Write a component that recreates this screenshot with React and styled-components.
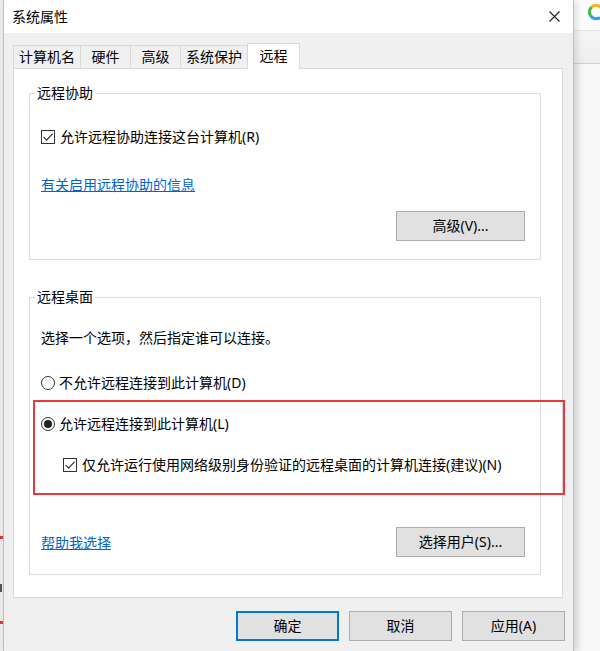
import React from 'react';
import styled, { createGlobalStyle, css } from 'styled-components';

const GlobalStyle = createGlobalStyle`
  html, body {
    margin: 0;
    padding: 0;
  }
  body {
    width: 600px;
    height: 651px;
    overflow: hidden;
    background: #f3f3f3;
    font-family: "Noto Sans", "Noto Sans CJK SC", sans-serif;
    color: #000;
  }
`;

const Screen = styled.div`
  display: flex;
  width: 600px;
  height: 651px;
  overflow: hidden;
`;

const LeftStrip = styled.div`
  flex: none;
  width: 3px;
  background:
    linear-gradient(#e2393b, #e2393b) 0 536px / 3px 3px no-repeat,
    linear-gradient(#555, #555) 0 584px / 2px 8px no-repeat,
    linear-gradient(#e2393b, #e2393b) 0 621px / 3px 3px no-repeat,
    #eeece8;
`;

const Dialog = styled.div`
  flex: none;
  width: 571px;
  box-sizing: border-box;
  border-left: 1px solid #cdbd98;
  border-right: 1px solid #cdbd98;
  background: #f0f0f0;
  display: flex;
  flex-direction: column;
  position: relative;
  z-index: 1;
  box-shadow: 3px 0 8px rgba(0, 0, 0, 0.12);
`;

const TitleBar = styled.div`
  height: 33px;
  flex: none;
  background: #fff;
  display: flex;
  align-items: center;
  justify-content: space-between;
  padding: 0 13px 0 8px;
  font-size: 14px;
  line-height: 20px;
`;

const CloseIcon = () => (
  <svg width="11" height="11" viewBox="0 0 11 11">
    <path d="M0.5 0.5 L10.5 10.5 M10.5 0.5 L0.5 10.5" stroke="#222" strokeWidth="1.1" fill="none" />
  </svg>
);

const Body = styled.div`
  padding-top: 10px;
  display: flex;
  flex-direction: column;
`;

const TabStrip = styled.div`
  display: flex;
  align-items: flex-end;
  padding-left: 9px;
`;

const Tab = styled.div`
  box-sizing: border-box;
  height: 23px;
  min-width: 51px;
  padding: 0 5px;
  border: 1px solid #d9d9d9;
  border-bottom: none;
  background: #f0f0f0;
  display: flex;
  align-items: center;
  justify-content: center;
  font-size: 14px;
  line-height: 20px;
  & + & {
    margin-left: -1px;
  }
  ${({ $active }) =>
    $active &&
    css`
      height: 26px;
      min-width: 53px;
      background: #fff;
      margin-bottom: -1px;
      position: relative;
      z-index: 1;
      padding-bottom: 2px;
    `}
`;

const Panel = styled.div`
  margin: 0 10px 0 9px;
  background: #fff;
  border: 1px solid #d9d9d9;
  padding: 0 21px 22px 15px;
  display: flex;
  flex-direction: column;
`;

const Group = styled.fieldset`
  margin: ${({ $gap }) => $gap}px 0 0;
  padding: 0;
  border: 1px solid #dcdcdc;
  min-width: 0;
`;

const Legend = styled.legend`
  margin-left: 5px;
  padding: 0 2px;
  font-size: 14px;
  line-height: 20px;
`;

const GroupBody = styled.div`
  display: flex;
  flex-direction: column;
  padding: ${({ $top }) => $top}px 15px ${({ $bottom }) => $bottom}px 11px;
`;

const Row = styled.div`
  display: flex;
  align-items: center;
  height: 20px;
  font-size: 14px;
  line-height: 20px;
  margin-top: ${({ $mt }) => $mt || 0}px;
  padding-left: ${({ $indent }) => $indent || 0}px;
  white-space: nowrap;
`;

const Box = styled.span`
  flex: none;
  box-sizing: border-box;
  width: 14px;
  height: 14px;
  border: 1px solid #333;
  background: #fff;
  margin-right: 5px;
  display: flex;
  align-items: center;
  justify-content: center;
`;

const Radio = styled.span`
  flex: none;
  box-sizing: border-box;
  width: 14px;
  height: 14px;
  border: 1px solid #333;
  border-radius: 50%;
  background: #fff;
  margin-right: 4px;
  display: flex;
  align-items: center;
  justify-content: center;
  &::after {
    content: '';
    width: 8px;
    height: 8px;
    border-radius: 50%;
    background: #222;
    display: ${({ $checked }) => ($checked ? 'block' : 'none')};
  }
`;

const Check = () => (
  <svg width="12" height="12" viewBox="0 0 12 12">
    <path d="M1.6 6.2 L4.6 9.2 L10.6 2.6" stroke="#333" strokeWidth="1.2" fill="none" />
  </svg>
);

const Checkbox = ({ children, ...rest }) => (
  <Row {...rest}>
    <Box>
      <Check />
    </Box>
    {children}
  </Row>
);

const RadioRow = ({ checked, children, ...rest }) => (
  <Row {...rest}>
    <Radio $checked={checked} />
    {children}
  </Row>
);

const Link = styled.a`
  align-self: flex-start;
  color: #0066cc;
  text-decoration: underline;
  font-size: 14px;
  line-height: 20px;
  margin-top: ${({ $mt }) => $mt || 0}px;
  cursor: pointer;
`;

const ButtonRow = styled.div`
  display: flex;
  align-items: center;
  justify-content: ${({ $split }) => ($split ? 'space-between' : 'flex-end')};
  margin-top: ${({ $mt }) => $mt}px;
`;

const Button = styled.button`
  box-sizing: border-box;
  width: ${({ $w }) => $w}px;
  height: 30px;
  padding: 0;
  background: #e1e1e1;
  border: 1px solid #adadad;
  font-family: inherit;
  font-size: 14px;
  line-height: 20px;
  color: #000;
  ${({ $default }) =>
    $default &&
    css`
      border: 2px solid #0078d7;
    `}
`;

const Highlight = styled.div`
  position: relative;
  margin-top: 21px;
  display: flex;
  flex-direction: column;
  &::after {
    content: '';
    position: absolute;
    top: -14px;
    bottom: -20px;
    left: -8px;
    right: -40px;
    border: 2px solid #e8383d;
    pointer-events: none;
  }
`;

const Footer = styled.div`
  display: flex;
  justify-content: flex-end;
  gap: 10px;
  padding: 13px 8px 0 0;
`;

const RightPane = styled.div`
  flex: 1;
  display: flex;
  flex-direction: column;
  background: #f4f4f4;
`;

const BrowserTop = styled.div`
  height: 30px;
  flex: none;
  background: #fdfdfd;
  border-bottom: 1px solid #e4e4e4;
  overflow: hidden;
`;

const BrowserNav = styled.div`
  height: 32px;
  flex: none;
  background: linear-gradient(#f6f6f6, #eeeeee);
  border-bottom: 1px solid #cfcfcf;
`;

const BrowserRest = styled.div`
  flex: 1;
  background: linear-gradient(to right, #ececec, #f9f9f9 10px);
`;

const Logo = () => (
  <svg width="26" height="30" viewBox="0 0 26 30">
    <path d="M16.4 15.3 A6.5 6.5 0 0 1 17.6 7.1" stroke="#3cb54a" strokeWidth="3" fill="none" />
    <path d="M17.6 7.1 A6.5 6.5 0 0 1 28.5 12" stroke="#f5b21c" strokeWidth="3" fill="none" />
    <path d="M16.4 15.3 A6.5 6.5 0 0 0 26 17.5" stroke="#2e9fd8" strokeWidth="3" fill="none" />
  </svg>
);

const tabs = ['计算机名', '硬件', '高级', '系统保护', '远程'];

export default function App() {
  return (
    <>
      <GlobalStyle />
      <Screen>
        <LeftStrip />
        <Dialog>
          <TitleBar>
            <span>系统属性</span>
            <CloseIcon />
          </TitleBar>
          <Body>
            <TabStrip>
              {tabs.map((t) => (
                <Tab key={t} $active={t === '远程'}>
                  {t}
                </Tab>
              ))}
            </TabStrip>
            <Panel>
              <Group $gap={14}>
                <Legend>远程协助</Legend>
                <GroupBody $top={24} $bottom={18}>
                  <Checkbox>允许远程协助连接这台计算机(R)</Checkbox>
                  <Link $mt={28}>有关启用远程协助的信息</Link>
                  <ButtonRow $mt={16}>
                    <Button $w={129}>高级(V)...</Button>
                  </ButtonRow>
                </GroupBody>
              </Group>
              <Group $gap={27}>
                <Legend>远程桌面</Legend>
                <GroupBody $top={21} $bottom={17}>
                  <Row>选择一个选项，然后指定谁可以连接。</Row>
                  <RadioRow $mt={25}>不允许远程连接到此计算机(D)</RadioRow>
                  <Highlight>
                    <RadioRow checked>允许远程连接到此计算机(L)</RadioRow>
                    <Checkbox $mt={21} $indent={22}>
                      仅允许运行使用网络级别身份验证的远程桌面的计算机连接(建议)(N)
                    </Checkbox>
                  </Highlight>
                  <ButtonRow $mt={52} $split>
                    <Link $mt={6}>帮助我选择</Link>
                    <Button $w={129}>选择用户(S)...</Button>
                  </ButtonRow>
                </GroupBody>
              </Group>
            </Panel>
            <Footer>
              <Button $w={103} $default>
                确定
              </Button>
              <Button $w={103}>取消</Button>
              <Button $w={103}>应用(A)</Button>
            </Footer>
          </Body>
        </Dialog>
        <RightPane>
          <BrowserTop>
            <Logo />
          </BrowserTop>
          <BrowserNav />
          <BrowserRest />
        </RightPane>
      </Screen>
    </>
  );
}
